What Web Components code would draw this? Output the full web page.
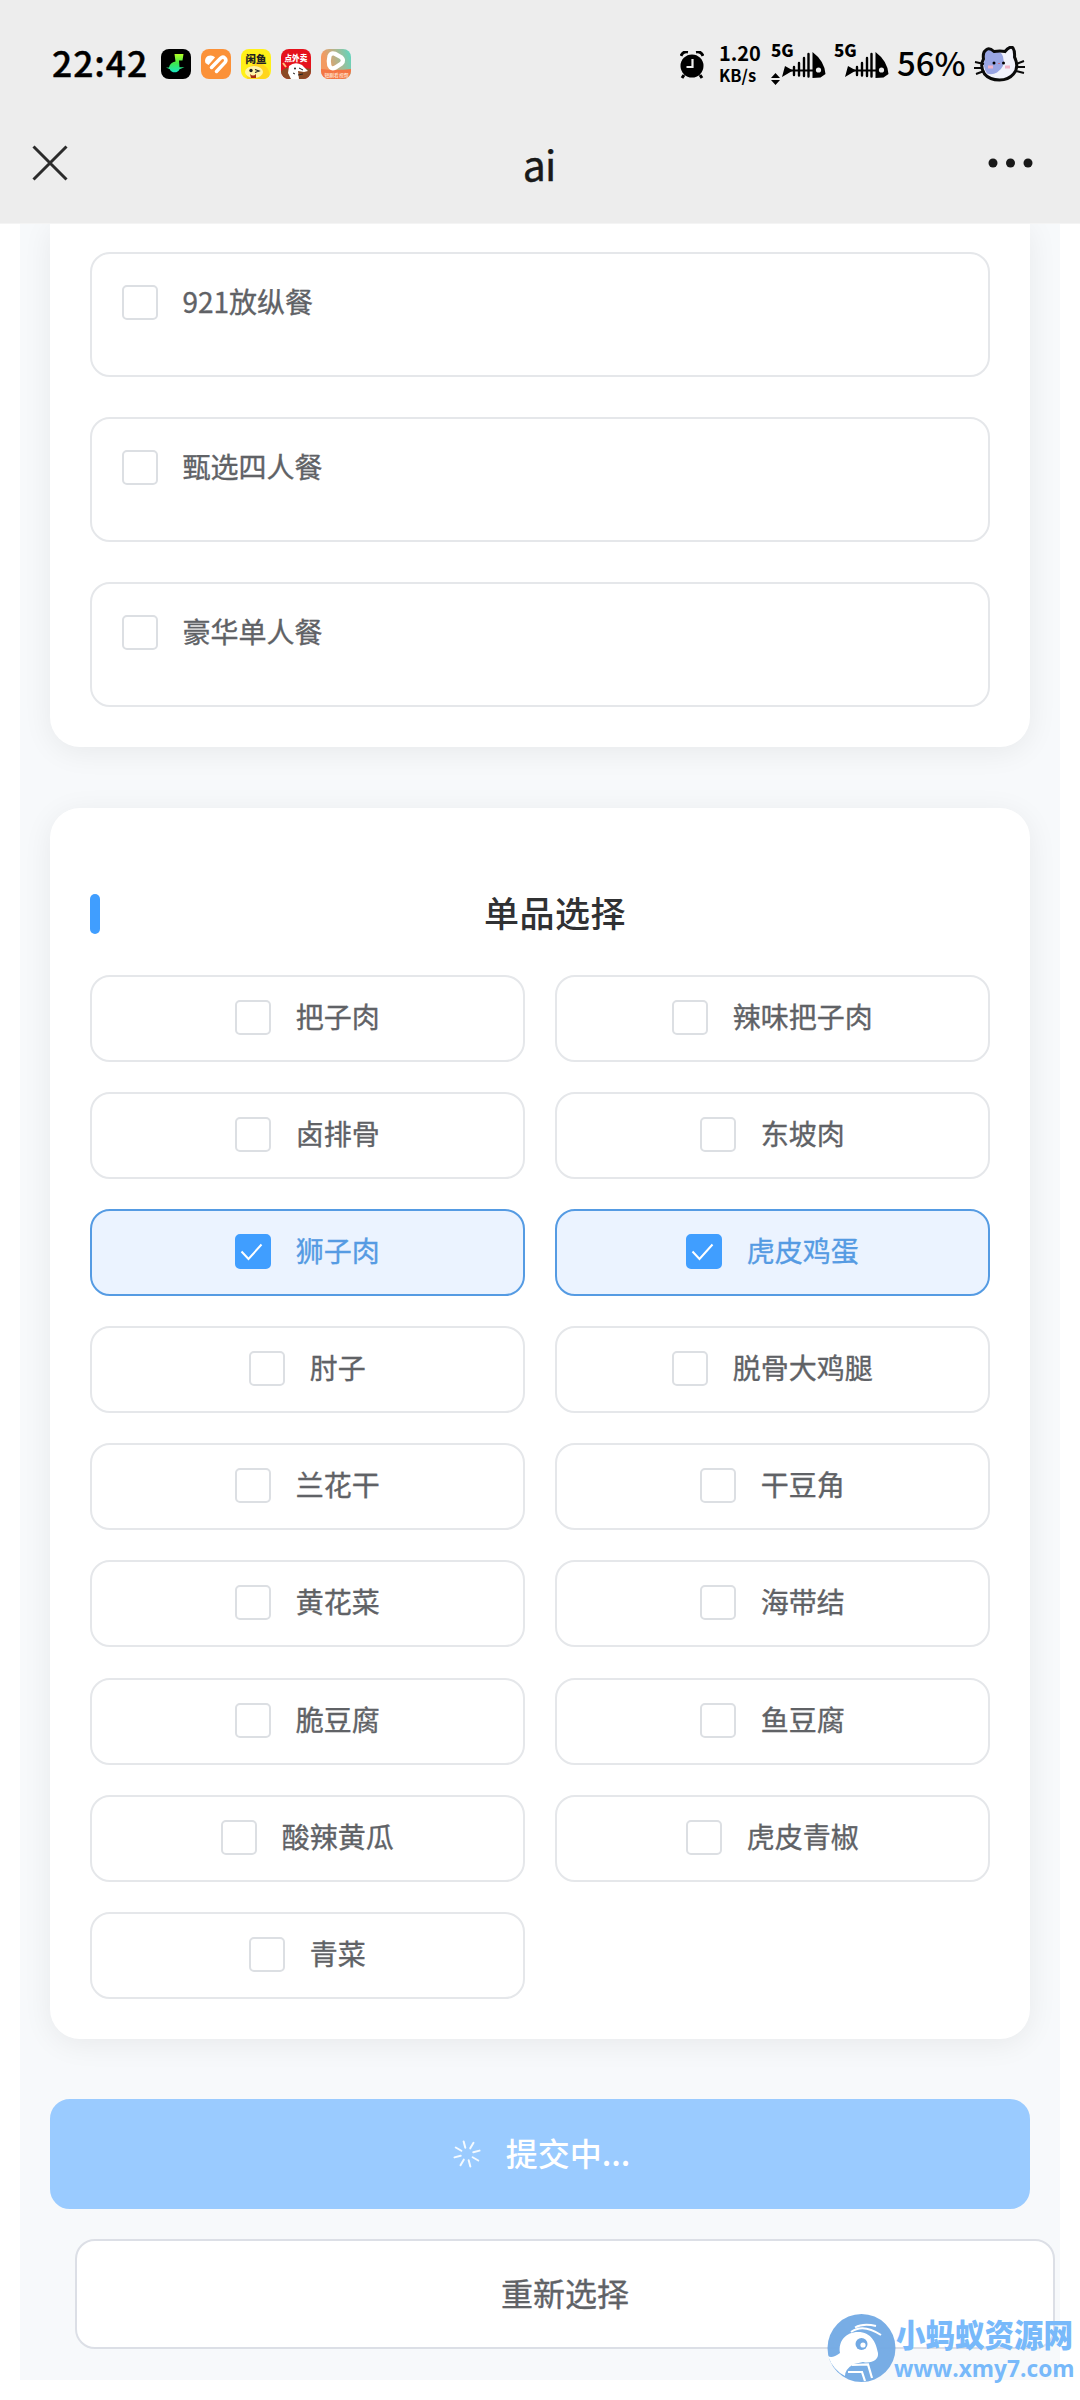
<!DOCTYPE html>
<html lang="zh-CN">
<head>
<meta charset="utf-8">
<title>ai</title>
<style>
html,body{margin:0;padding:0;background:#fff}
body{width:1080px;height:2400px;overflow:hidden;position:relative;font-family:"Noto Sans CJK SC",sans-serif}
</style>
</head>
<body>
<order-page></order-page>
<script>
const define=(name,html,setup)=>customElements.define(name,class extends HTMLElement{
  connectedCallback(){
    if(this.shadowRoot)return;
    const t=document.createElement('template');
    t.innerHTML=html;
    this.attachShadow({mode:'open'}).append(t.content.cloneNode(true));
    if(setup)setup(this,this.shadowRoot);
  }
});

define('app-icons',`<style>:host{display:flex;gap:10px}svg{width:30px;height:30px;display:block}text{font-family:"Noto Sans CJK SC",sans-serif;font-weight:900}</style>
<svg viewBox="0 0 30 30"><defs><linearGradient id="g" x1="0" y1="0" x2="0" y2="1"><stop offset="0" stop-color="#b5ff26"/><stop offset=".5" stop-color="#3fe84b"/><stop offset="1" stop-color="#18e6c4"/></linearGradient></defs><rect width="30" height="30" rx="8" fill="#000"/><path d="M13.500 5H22.500L21.500 11.500H18L18.500 18.300H23.500L18.500 20.200A5.300 5.300 0 0 1 8.800 20.200L5 18.500H8C8.500 15 11 13 14.500 12.500Z" fill="url(#g)"/></svg>
<svg viewBox="0 0 30 30"><rect width="30" height="30" rx="8" fill="#fb9138"/><path d="M4.500 14C2.500 9 7.500 4.500 13 7.500L14 8.500 7.500 16Z" fill="#fff"/><path d="M10.500 18.500L19.500 9.200C22.500 6.500 26.500 10 24 13.500L15.500 22.500" stroke="#fff" stroke-width="3.500" stroke-linecap="round" fill="none"/></svg>
<svg viewBox="0 0 30 30"><defs><clipPath id="c"><rect width="30" height="30" rx="8"/></clipPath></defs><g clip-path="url(#c)"><rect width="30" height="30" fill="#fff019"/><circle cx="17" cy="26" r="11.500" fill="#ffd51c"/><ellipse cx="13" cy="23" rx="9" ry="6" fill="#fff5a6"/><circle cx="10" cy="21.500" r="1.700" fill="#222"/><path d="M14 20.500l4 1.500-4 1.500" stroke="#222" fill="none" stroke-width="1.200"/><path d="M9 25q3 3 6 0v4h-5z" fill="#a52c10"/></g><text x="4.500" y="13.500" font-size="10.500" fill="#222">闲鱼</text></svg>
<svg viewBox="0 0 30 30"><rect width="30" height="30" rx="8" fill="#e5121c"/><path d="M0 22l5-3h20l5 1v2a8 8 0 0 1-8 8H8a8 8 0 0 1-8-8z" fill="#8a4a25"/><path d="M8 17q6-5 13-1l6 6-4 1-6-1 1 8h-8l-3-6z" fill="#fff"/><circle cx="14" cy="19.500" r="1" fill="#222"/><path d="M18 19l4 2M12 24l2 1M17 26l5-1" stroke="#222" stroke-width="1"/><path d="M2 14l3 4" stroke="#ffc37a" stroke-width="2"/><text x="3.500" y="12" font-size="7.600" fill="#fff">点外卖</text></svg>
<svg viewBox="0 0 30 30"><defs><linearGradient id="h" x1="0" y1=".3" x2="1" y2="0"><stop offset=".1" stop-color="#f39a62"/><stop offset=".9" stop-color="#6ad2ba"/></linearGradient></defs><rect width="30" height="30" rx="8" fill="url(#h)"/><path d="M0 20q15 2 30 0v2a8 8 0 0 1-8 8H8a8 8 0 0 1-8-8z" fill="#f47544"/><path d="M8.500 7Q10 3.500 14 4.800L20.500 8.500Q23.500 11.500 20.500 14.500L14 18.800Q10 20.500 8.300 16.500 7.300 11.500 8.500 7Z" fill="none" stroke="#fff" stroke-width="4.200"/><text x="3.500" y="28" font-size="4.800" fill="#ffe3d0" style="font-weight:500">短剧看视频</text></svg>`);

define('fish-signal',`<style>:host{display:block}svg{display:block;width:44px;height:26px}</style>
<svg viewBox="0 0 44 26"><path d="M30.500 0q12 9 13 22l-5 3.500-8 .5zM0 25l3-11 8 4.500z"/><path d="M5 18.500h28" stroke="#000" stroke-width="2"/><path d="M12 15v8M17 11v12.500M22 6v18M26.500 2v22.500" stroke="#000" stroke-width="2.400" stroke-linecap="round"/><circle cx="36.500" cy="18" r="2.600" fill="#ededed"/></svg>`);

define('status-bar',`<style>
:host{display:flex;height:128px;align-items:center;box-sizing:border-box;padding:0 51px 0 52px;color:#000}
span{display:block;line-height:1;white-space:nowrap}
.time{font-size:35.500px;font-weight:500;width:96px;letter-spacing:.9px;margin-top:-5px;-webkit-text-stroke:.4px}
app-icons{margin-left:13px}
.alarm{width:24px;height:28px;margin-left:329px;margin-top:2px}
.rate{margin-left:15px;width:52px;font-weight:700;font-size:20px}
.rate span{line-height:18px}.rate span+span{font-size:16.500px;margin-top:4px}
.net{display:grid;grid-template-columns:22px 41px;width:63px;height:42px}
.net b{font-size:17px;line-height:17px;font-weight:900;grid-area:1/1;margin-top:-2px}
.net fish-signal{grid-area:1/1;margin:9px 0 0 11px}
.net .ud{grid-area:1/1;width:9px;height:12px;margin:30px 0 0 0}
.pct{font-size:33px;font-weight:500;width:77px;margin-top:-3px}
.cat{width:51px;height:36px}
</style>
<span class="time">22:42</span><app-icons></app-icons>
<svg class="alarm" viewBox="0 0 24 28"><circle cx="12" cy="15" r="11.500"/><path d="M1 5q2-5 7-4M16 1q5-1 7 4M4 24l-2 3M20 24l2 3" stroke="#000" stroke-width="3" fill="none"/><path d="M12.500 8v8H6.500" stroke="#ededed" stroke-width="2.200" fill="none"/></svg>
<div class="rate"><span>1.20</span><span>KB/s</span></div>
<div class="net"><b>5G</b><fish-signal></fish-signal><svg class="ud" viewBox="0 0 9 12"><path d="M4.500 0L9 5H0zM0 7h9l-4.500 5z"/></svg></div>
<div class="net"><b>5G</b><fish-signal></fish-signal></div>
<span class="pct">56%</span>
<svg class="cat" viewBox="0 0 51 36"><path d="M12 4q3-3 8 1.500 6-1 11 0 5-6 8-3.500 2 3 1.500 9 5 10-1 17-5 6-14 6-10 0-15-6-5-8-1-15-1-7 2.500-9z" fill="#f1f2fb"/><path d="M12 4q3-3 8 1.500 7-1 9 5 3 10-6 16-5 3-10 1-5-8-2-14-2-7 1-9.500z" fill="#99a5e4"/><path d="M12 4q3-3 8 1.500 6-1 11 0 5-6 8-3.500 2 3 1.500 9 5 10-1 17-5 6-14 6-10 0-15-6-5-8-1-15-1-7 2.500-9z" fill="none" stroke="#0b0b0b" stroke-width="3"/><path d="M1 16l9 2M0 22h9M2 28l8-3M50 15l-8 3M51 21h-9M50 27l-8-2" stroke="#0b0b0b" stroke-width="2"/><circle cx="20" cy="17" r="1.500"/><circle cx="29.500" cy="17" r="1.500"/><path d="M14 21h5M31 21h5" stroke="#efb1c6" stroke-width="3"/><path d="M24 17.500h2" stroke="#c86f8b"/></svg>`);

define('nav-bar',`<style>
:host{display:flex;height:95px;align-items:flex-start;justify-content:space-between;padding:0 46px 0 32px}
h1{margin:13px 0 0;font-size:41px;line-height:44px;font-weight:400;color:#191919;letter-spacing:-.8px;-webkit-text-stroke:.4px}
svg{display:block}.x{width:36px;height:36px;margin-top:17px}.dots{width:46px;height:10px;margin-top:30px}
.l,.r{flex:1;display:flex}.r{justify-content:flex-end}.l{margin-right:12px}
</style>
<div class="l"><svg class="x" viewBox="0 0 36 36"><path d="M1.500 1.500l33 33M34.500 1.500l-33 33" stroke="#2b2b2b" stroke-width="3"/></svg></div>
<h1>ai</h1>
<div class="r"><svg class="dots" viewBox="0 0 46 10"><g fill="#191919"><circle cx="5" cy="5" r="4.500"/><circle cx="22.500" cy="5" r="4.500"/><circle cx="40" cy="5" r="4.500"/></g></svg></div>`);

define('check-item',`<style>
:host{display:flex;align-items:center;justify-content:center;gap:25px;box-sizing:border-box;height:87px;padding-bottom:2px;border:2px solid #e5e7ea;border-radius:20px;background:#fff;color:#606266;font-size:28px;line-height:36px}
:host([block]){height:125px;justify-content:flex-start;align-items:flex-start;padding:31px 30px}
:host([checked]){border-color:#559be3;background:#ebf3ff;color:#559be3}
i{display:block;flex:none;width:35.500px;height:35px;box-sizing:border-box;border:2px solid #dcdfe3;border-radius:5px;background:#fff}
span{display:block;margin-top:-2px;-webkit-text-stroke:.35px}
:host(:not([block])) span{margin-top:-3px}
:host([checked]) i{background:#409eff;border-color:#409eff}
svg{display:none}:host([checked]) svg{display:block;width:32px;height:32px}
</style><i><svg viewBox="0 0 32 32"><path d="M4.500 15.500l7 7.500L24.500 8.500" fill="none" stroke="#fff" stroke-width="2"/></svg></i><span><slot></slot></span>`);

define('choice-card',`<style>
:host{display:block;box-sizing:border-box;background:#fff;border-radius:30px;box-shadow:0 5px 30px rgba(0,0,0,.065);padding:0 40px 40px}
</style><slot></slot>`);

define('card-title',`<style>
:host{display:flex;align-items:center;height:40px;padding-top:86px;padding-bottom:41px}
i{display:block;width:10px;height:40px;border-radius:5px;background:#409eff}
h2{flex:1;margin:0 0 4px 20px;text-align:center;font-size:35px;letter-spacing:.5px;line-height:40px;font-weight:500;color:#303133}
</style><i></i><h2><slot></slot></h2>`);

define('action-button',`<style>
:host{display:flex;align-items:center;justify-content:center;box-sizing:border-box;height:110px;border-radius:20px;border:2px solid #dcdfe6;background:#fff;font-size:32px;color:#606266}
:host([loading]){background:#9acbff;border-color:#9acbff;color:#fff;font-weight:500;padding-left:3px}
span{display:block;margin-top:-4px;-webkit-text-stroke:.35px}
:host([loading]) span{-webkit-text-stroke:0}
svg{display:none}:host([loading]) svg{display:block;width:28px;height:28px;margin-right:25px}
</style><svg viewBox="-14 -14 28 28"><g stroke="#f4faff" stroke-width="2" stroke-linecap="round" transform="rotate(-15)"></g></svg><span><slot></slot></span>`,(h,r)=>{
  r.querySelector('g').innerHTML=[0,45,90,135,180,225,270,315].map(a=>`<path d="M0-6.500V-13" transform="rotate(${a})"/>`).join('');
});

define('site-mark',`<style>
:host{position:absolute;left:827px;top:2312px;display:flex;color:#78b9fa}
svg{width:70px;height:72px;display:block}
div{display:flex;flex-direction:column;margin-left:-3px}
.a,.b{white-space:nowrap;display:block}
.a{font:900 29.500px/34px "Noto Sans CJK SC",sans-serif;margin:4px 0 0 2px;transform:scaleY(1.06)}
.b{font:700 22.700px/26px "Open Sans","Noto Sans",sans-serif;margin-top:6px}
</style>
<svg viewBox="0 0 70 72"><circle cx="34.500" cy="36" r="34" fill="#71a9e4" fill-opacity=".95"/><path d="M1 44Q5 47 13 41C11 29 19 20 31 20 44 20 49 30 51 41 52 48 44 52 36 50L27 52Q18 57 18 64Q6 58 1 44Z" fill="#fff"/><path d="M24 20Q36 11 54 23M28 15.500Q36 11 49 14" stroke="#fff" stroke-width="2" fill="none"/><circle cx="34.500" cy="32" r="6" fill="#71a9e4"/><circle cx="36" cy="33" r="2.600" fill="#fff"/><path d="M25 53L41 52.500 45 66M21 60L35 60 38 69" stroke="#fff" stroke-width="2.200" fill="none"/></svg>
<div><span class="a">小蚂蚁资源网</span><span class="b">www.xmy7.com</span></div>`);

define('order-page',`<style>
:host{display:flex;flex-direction:column;width:1080px;height:2400px}
header{background:#ededed;height:223px;border-bottom:1px solid #f4f4f4}
main{margin:0 20px;height:2156px;box-sizing:border-box;padding:0 30px;background:#f7f9fb;display:flex;flex-direction:column;overflow:hidden;flex:none}
.first{padding-top:28px;border-radius:0 0 30px 30px}
.stack{display:flex;flex-direction:column;gap:40px}
.second{margin-top:61px}
.grid{display:grid;grid-template-columns:1fr 1fr;column-gap:30px;row-gap:30.1px}
.submit{margin-top:60.200px}.reset{margin:30px -25px 0 25px}
</style>
<header><status-bar></status-bar><nav-bar></nav-bar></header>
<main>
<choice-card class="first"><div class="stack"><check-item block>921放纵餐</check-item><check-item block>甄选四人餐</check-item><check-item block>豪华单人餐</check-item></div></choice-card>
<choice-card class="second"><card-title>单品选择</card-title><div class="grid"></div></choice-card>
<action-button class="submit" loading>提交中...</action-button>
<action-button class="reset">重新选择</action-button>
</main>
<site-mark></site-mark>`,(h,r)=>{
  const picked=['狮子肉','虎皮鸡蛋'];
  r.querySelector('.grid').innerHTML=['把子肉','辣味把子肉','卤排骨','东坡肉','狮子肉','虎皮鸡蛋','肘子','脱骨大鸡腿','兰花干','干豆角','黄花菜','海带结','脆豆腐','鱼豆腐','酸辣黄瓜','虎皮青椒','青菜'].map(n=>`<check-item${picked.includes(n)?' checked':''}>${n}</check-item>`).join('');
});
</script>
</body>
</html>
